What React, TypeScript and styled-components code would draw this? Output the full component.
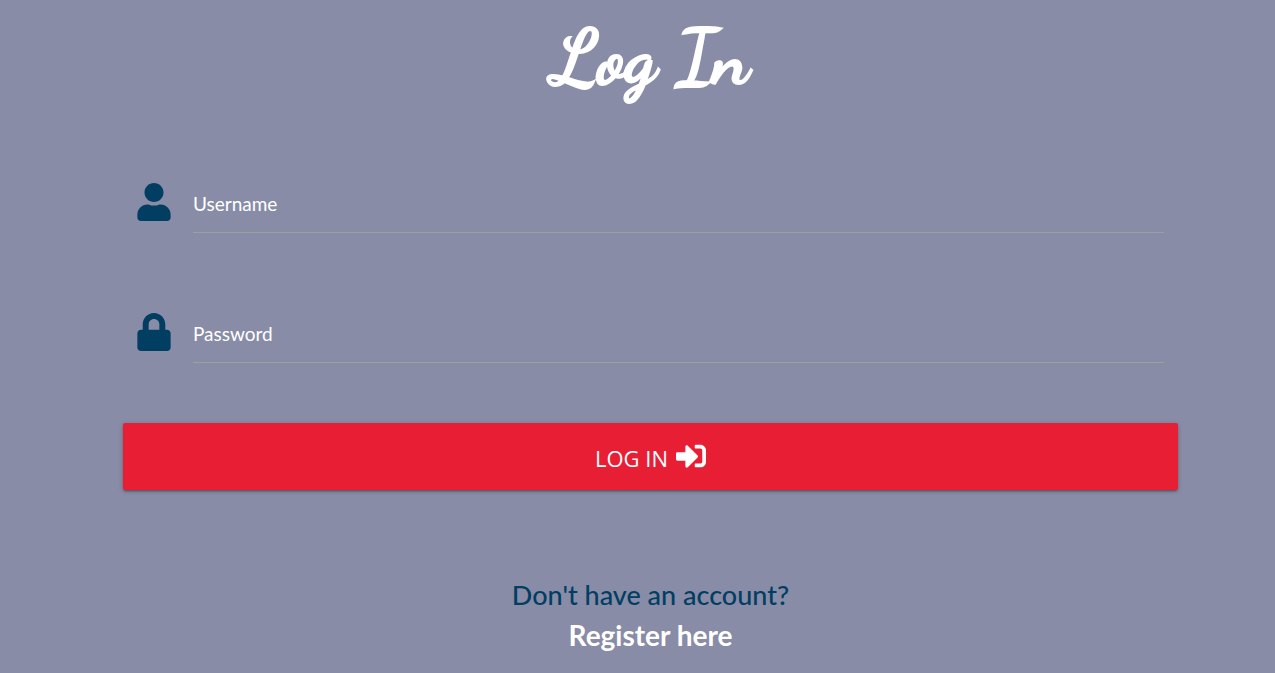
import React from "react";
import styled, { createGlobalStyle } from "styled-components";
import { FaLock, FaSignInAlt, FaUser } from "react-icons/fa";

const navy = "#023e62";

const GlobalStyle = createGlobalStyle`
  *, *::before, *::after { box-sizing: border-box; }
  body {
    margin: 0;
    min-height: 100vh;
    background: #888ca6;
    color: #ffffff;
    font-family: Lato, sans-serif;
  }
`;

const Page = styled.main`
  padding: 14px 97px 16px 123px;
`;

const Title = styled.h1`
  margin: 0 0 58px;
  font-family: "Dancing Script", cursive;
  font-size: 76px;
  font-weight: 700;
  line-height: 88px;
  text-align: center;
  -webkit-text-stroke: 2px #ffffff;
`;

const Fields = styled.div`
  display: grid;
  gap: 57px;
  padding: 0 14px;
`;

const Field = styled.div`
  display: flex;
  align-items: flex-start;
`;

const FieldIcon = styled.span`
  display: flex;
  width: 56px;
  padding-top: 23px;
  color: ${navy};

  svg {
    width: 34px;
    height: 38px;
  }
`;

const InputWrap = styled.div`
  position: relative;
  flex: 1;
`;

const FieldLabel = styled.label`
  position: absolute;
  top: 32px;
  left: 0;
  font-size: 19px;
  line-height: 24px;
  pointer-events: none;
`;

const FieldInput = styled.input`
  display: block;
  width: 100%;
  height: 73px;
  padding: 16px 0 0;
  border: 0;
  border-bottom: 1px solid #9e9e9e;
  outline: 0;
  background: transparent;
  color: #ffffff;
  font: inherit;
  font-size: 19px;

  &:focus + label,
  &:not(:placeholder-shown) + label {
    top: 4px;
  }
`;

const SubmitButton = styled.button`
  display: flex;
  align-items: center;
  justify-content: center;
  gap: 8px;
  width: 100%;
  height: 67px;
  margin-top: 60px;
  padding: 0 0 2px;
  border: 0;
  border-radius: 2px;
  background: #e81e35;
  box-shadow: 0 2px 2px rgba(0, 0, 0, 0.14), 0 3px 1px -2px rgba(0, 0, 0, 0.12),
    0 1px 5px rgba(0, 0, 0, 0.2);
  color: #ffffff;
  font-family: "Open Sans", sans-serif;
  font-size: 22px;
  cursor: pointer;
`;

const ButtonText = styled.span`
  padding-top: 4px;
`;

const Footer = styled.p`
  display: flex;
  flex-direction: column;
  align-items: center;
  margin: 84px 0 0;
  color: ${navy};
  font-size: 27px;
  font-weight: 500;
  line-height: 41px;
`;

const RegisterLink = styled.a`
  color: #ffffff;
  font-size: 28px;
  font-weight: 700;
  text-decoration: none;
`;

type TextFieldProps = {
  id: string;
  label: string;
  type: string;
  icon: React.ReactNode;
};

function TextField({ id, label, type, icon }: TextFieldProps) {
  return (
    <Field>
      <FieldIcon aria-hidden="true">{icon}</FieldIcon>
      <InputWrap>
        <FieldInput id={id} name={id} type={type} placeholder=" " />
        <FieldLabel htmlFor={id}>{label}</FieldLabel>
      </InputWrap>
    </Field>
  );
}

export default function App() {
  return (
    <>
      <GlobalStyle />
      <Page>
        <Title>Log In</Title>
        <form onSubmit={(event) => event.preventDefault()}>
          <Fields>
            <TextField id="username" label="Username" type="text" icon={<FaUser />} />
            <TextField id="password" label="Password" type="password" icon={<FaLock />} />
          </Fields>
          <SubmitButton type="submit">
            <ButtonText>LOG IN</ButtonText>
            <FaSignInAlt size={30} aria-hidden="true" />
          </SubmitButton>
        </form>
        <Footer>
          <span>Don't have an account?</span>
          <RegisterLink href="#register">Register here</RegisterLink>
        </Footer>
      </Page>
    </>
  );
}
